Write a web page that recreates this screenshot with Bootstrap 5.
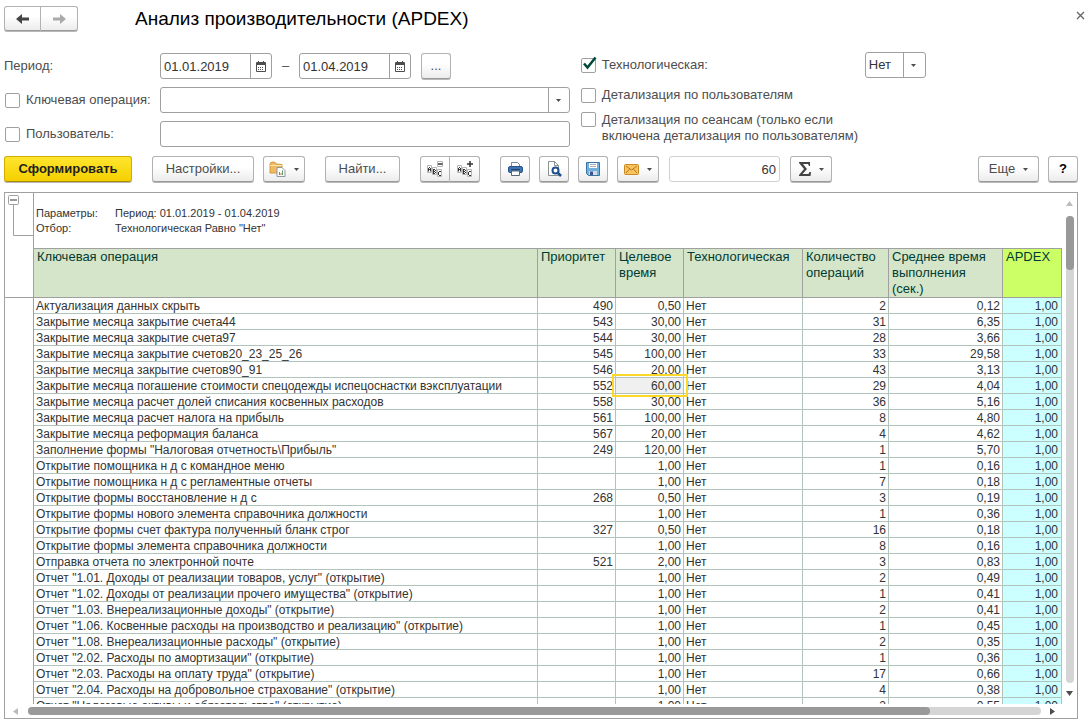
<!DOCTYPE html>
<html lang="ru">
<head>
<meta charset="utf-8">
<meta name="viewport" content="width=device-width, initial-scale=1">
<title>Анализ производительности (APDEX)</title>
<link href="https://cdn.jsdelivr.net/npm/bootstrap@5.3.0/dist/css/bootstrap.min.css" rel="stylesheet">
<style>
:root { --line: #a0a0a0; --ink: #4d4d4d; }
body { font: 13px/16px "Liberation Sans", Arial, sans-serif; color: var(--ink); background: #fff; }
.app-window { height: 100vh; min-height: 480px; padding: 6px 11px 2px 4px; }
.app-title { font-size: 19px; line-height: 26px; color: #000; margin: 0 0 0 57px; font-weight: 400; }
.app-close { border: 0; background: none; padding: 0; width: 16px; height: 16px; line-height: 0; margin-right: -10px; margin-top: 1px; }

.btn-tool { --bs-btn-font-size: 13px; --bs-btn-line-height: 16px; --bs-btn-padding-x: 0; --bs-btn-padding-y: 0;
  --bs-btn-color: #4d4d4d; --bs-btn-border-color: #b2b2b2; --bs-btn-border-radius: 3px; --bs-btn-hover-border-color: #999;
  height: 26px; min-width: 30px; display: inline-flex; align-items: center; justify-content: center;
  background: linear-gradient(#fff 40%, #ececec); border-bottom-color: #999; box-shadow: 0 1px 0 #b8b8b8; }
.btn-main { --bs-btn-color: #1e1e1e; width: 128px; font-weight: 700; background: linear-gradient(#ffe52e, #f5d000);
  border-color: #cfae00; border-bottom-color: #a88e00; }
.btn-settings { width: 102px; }
.btn-find { width: 75px; }
.btn-menu { width: 42px; gap: 8px; }
.btn-more { width: 61px; gap: 8px; }
.btn-nav { width: 37px; height: 25px; }
.btn-pair .btn + .btn { border-left: 0; }
.btn-row { gap: 9px; }

.field { height: 26px; min-height: 26px; padding: 0 3px; border: 1px solid var(--line); border-radius: 3px;
  font-size: 13px; line-height: 16px; color: #333; background-color: #fff; }
.field-btn { width: 22px; height: 26px; padding: 0; border: 1px solid var(--line); border-radius: 3px; background: #fff;
  display: inline-flex; align-items: center; justify-content: center; }
.date-group { width: 112px; }
.date-dash { width: 27px; }
.date-more { margin-left: 10px; }
.field-select { width: 61px; appearance: none;
  background: url("data:image/svg+xml,%3Csvg xmlns='http://www.w3.org/2000/svg' width='22' height='24'%3E%3Cpath d='M.5 0V24' stroke='%23a0a0a0'/%3E%3Cpath d='M8 11h5l-2.5 3z' fill='%234d4d4d'/%3E%3C/svg%3E") no-repeat right center #fff; }
.field-count { width: 111px; margin: 0 1px; border: 1px solid #d0d0d0; text-align: right; }
.tick { display: block; width: 15px; height: 15px; margin: 0; flex: none; border: 1px solid var(--line); border-radius: 2px; appearance: none; background: #fff; }
.tick-wrap { position: relative; flex: none; }
.tick-mark { position: absolute; left: 1px; top: -2px; pointer-events: none; display: none; }
.tick:checked + .tick-mark { display: block; }

.filters { display: grid; grid-template-columns: 8fr 7fr; column-gap: 11px; margin-top: 21px; padding-right: 2px; }
.filters-left { display: grid; grid-template-columns: 156px 1fr; row-gap: 8px; align-items: center; }
.tick-row { display: flex; align-items: center; gap: 6px; }
.filters-left .tick-row { padding-left: 1px; }
.filters-right { display: grid; align-content: start; row-gap: 9px; margin-top: -1px; }
.filters-right label { flex: 0 1 257px; }

.toolbar { margin-top: 9px; column-gap: 20px; }

.report { margin-top: 10px; border: 1px solid var(--line); display: grid; grid-template-columns: 1fr 15px; grid-template-rows: minmax(0, 1fr) 14px; }
.sheet { display: grid; grid-template-columns: 29px 1fr; overflow: hidden; color: #333; }
.gutter { border-right: 1px solid var(--line); }
.gutter-head { height: 105px; border-bottom: 1px solid var(--line); padding: 2px 0 0 3px; margin-right: -1px; }
.params { display: grid; grid-template-columns: 79px 1fr; font-size: 11px; line-height: 15px; padding: 13px 0 12px 2px; margin: 0; height: 55px; }
.params dt { font-weight: 400; }
.grid-table { width: 100%; table-layout: fixed; border-collapse: separate; border-spacing: 0; font-size: 12px; line-height: 14px; }
.grid-table th { height: 50px; padding: 0 2px 0 3px; font-size: 13px; line-height: 16px; font-weight: 400; vertical-align: top; color: #003c34;
  background: #d5e5c9; border: solid var(--line); border-width: 1px 1px 1px 0; }
.grid-table th.mark-col { background: #cf6; }
.grid-table td { height: 16px; padding: 1px 2px 0; white-space: nowrap; border: solid #b0c4bc; border-width: 0 1px 1px 0; text-align: right; }
.grid-table td:first-child, .grid-table td:nth-child(4) { text-align: left; }
.grid-table td:last-child { background: #cff; padding-right: 3px; }
.grid-table td.picked { position: relative; background: #f0f0f0; }
.picked::after { content: ""; position: absolute; inset: -4px -5px -4px -4px; border: 2px solid #fcd928; }

.bar-v { display: flex; flex-direction: column; align-items: center; padding: 8px 0 8px; }
.bar-h { display: flex; align-items: center; padding: 0 7px 0 8px; }
.track { background: #d5d5d5; border-radius: 4px; flex: 1; }
.thumb { background: #999; border-radius: 4px; }
.bar-v .track { width: 8px; margin: 10px 0 8px; }
.bar-v .thumb { height: 54px; }
.bar-h .track { height: 8px; margin: 0 9px 0 10px; }
.bar-h .thumb { height: 8px; width: 89%; }
</style>
</head>
<body>
<main class="app-window d-flex flex-column">
  <header class="d-flex align-items-start">
    <div class="btn-pair d-flex">
      <button class="btn btn-tool btn-nav rounded-end-0" type="button" aria-label="Назад"><svg width="16" height="12" viewBox="0 0 16 12"><path d="M1 6 7 1v3.500h7v3H7V11z" fill="#444"/></svg></button>
      <button class="btn btn-tool btn-nav rounded-start-0" type="button" aria-label="Вперед"><svg width="16" height="12" viewBox="0 0 16 12"><path d="M15 6 9 1v3.500H2v3h7V11z" fill="#aaa"/></svg></button>
    </div>
    <h1 class="app-title flex-grow-1">Анализ производительности (APDEX)</h1>
    <button class="app-close" type="button" aria-label="Закрыть"><svg width="9" height="9" viewBox="0 0 9 9"><path d="m1 1 7 7M8 1 1 8" stroke="#666" stroke-width="1.3"/></svg></button>
  </header>

  <form class="filters">
    <div class="filters-left">
      <label for="from">Период:</label>
      <div class="d-flex align-items-center">
        <div class="input-group date-group flex-nowrap">
          <input class="form-control field" id="from" value="01.01.2019">
          <button class="field-btn" type="button" aria-label="Календарь"><svg width="10" height="11" viewBox="0 0 10 11"><path d="M.5 1.500h9v9h-9z" fill="#fff" stroke="#4d4d4d"/><path d="M0 3h10" stroke="#4d4d4d" stroke-width="2"/><path d="M2.500 0v2M7.500 0v2" stroke="#4d4d4d"/><path d="M2 6.500h6M2 8.500h6" stroke="#4d4d4d" stroke-dasharray="1 1"/></svg></button>
        </div>
        <span class="date-dash text-center">–</span>
        <div class="input-group date-group flex-nowrap">
          <input class="form-control field" id="to" value="01.04.2019" aria-label="Конец периода">
          <button class="field-btn" type="button" aria-label="Календарь"><svg width="10" height="11" viewBox="0 0 10 11"><path d="M.5 1.500h9v9h-9z" fill="#fff" stroke="#4d4d4d"/><path d="M0 3h10" stroke="#4d4d4d" stroke-width="2"/><path d="M2.500 0v2M7.500 0v2" stroke="#4d4d4d"/><path d="M2 6.500h6M2 8.500h6" stroke="#4d4d4d" stroke-dasharray="1 1"/></svg></button>
        </div>
        <button class="btn btn-tool date-more" type="button">...</button>
      </div>
      <div class="tick-row"><input class="tick" type="checkbox" id="useOp"><label for="useOp">Ключевая операция:</label></div>
      <div class="input-group flex-nowrap">
        <input class="form-control field" aria-label="Ключевая операция">
        <button class="field-btn" type="button" aria-label="Выбрать"><svg width="5" height="3"><path d="M0 0h5L2.500 3z" fill="#4d4d4d"/></svg></button>
      </div>
      <div class="tick-row"><input class="tick" type="checkbox" id="useUser"><label for="useUser">Пользователь:</label></div>
      <input class="form-control field" aria-label="Пользователь">
    </div>
    <div class="filters-right">
      <div class="tick-row">
        <span class="tick-wrap"><input class="tick" type="checkbox" id="tech" checked><svg class="tick-mark" width="15" height="14" viewBox="0 0 15 14"><path d="M2 7.500 5.500 11.500 13.500 1.500" fill="none" stroke="#00473c" stroke-width="2.500"/></svg></span>
        <label for="tech">Технологическая:</label>
        <select class="field field-select" aria-label="Технологическая"><option>Нет</option><option>Да</option></select>
      </div>
      <div class="tick-row"><input class="tick" type="checkbox" id="byUser"><label for="byUser">Детализация по пользователям</label></div>
      <div class="tick-row align-items-start"><input class="tick" type="checkbox" id="bySession"><label for="bySession">Детализация по сеансам (только если включена детализация по пользователям)</label></div>
    </div>
  </form>

  <div class="toolbar d-flex align-items-center" role="toolbar">
    <button class="btn btn-tool btn-main" type="button">Сформировать</button>
    <div class="btn-row d-flex">
      <button class="btn btn-tool btn-settings" type="button">Настройки...</button>
      <button class="btn btn-tool btn-menu" type="button" aria-label="Варианты"><svg width="17" height="16" viewBox="0 0 17 16"><path d="M1 3q0-2 3-2t3 2l6 .5V12H1z" fill="#eebb62" stroke="#d39a3c"/><path d="M1 4.500h12" stroke="#fbe2ae"/><path d="M8 6.500h5l3 3v6H8z" fill="#fff" stroke="#8b97a1"/><path d="M10.500 14v-3M13.500 14V9.500" stroke="#59a05b"/><path d="M12 14v-2" stroke="#d96b3b"/></svg><svg width="5" height="3"><path d="M0 0h5L2.500 3z" fill="#4d4d4d"/></svg></button>
    </div>
    <button class="btn btn-tool btn-find" type="button">Найти...</button>
    <div class="btn-pair d-flex">
      <button class="btn btn-tool rounded-end-0" type="button" aria-label="Свернуть группы"><svg width="16" height="17" viewBox="0 0 16 17"><path d="M.5 4.500h4v7h-4zM5.500 6.500h4v7h-4zM10.500 8.500h4v7h-4zM10.500.5h5v5h-5z" fill="#fff" stroke="#b5b5b5"/><path d="M1.500 10.500V7M3.500 10.500V7M2 6.500h1M2 8.500h1M6.500 8v5M7 8.500h1M7 10.500h1M7 12.500h1M8.500 9v1M8.500 11v1M11.500 11v3M12 10.500h2M12 14.500h2" fill="none" stroke="#333"/><path d="M11 3h4.500" stroke="#333" stroke-width="1.500"/></svg></button>
      <button class="btn btn-tool rounded-start-0" type="button" aria-label="Развернуть группы"><svg width="16" height="17" viewBox="0 0 16 17"><path d="M.5 4.500h4v7h-4zM5.500 6.500h4v7h-4zM10.500 8.500h4v7h-4z" fill="#fff" stroke="#b5b5b5"/><path d="M1.500 10.500V7M3.500 10.500V7M2 6.500h1M2 8.500h1M6.500 8v5M7 8.500h1M7 10.500h1M7 12.500h1M8.500 9v1M8.500 11v1M11.500 11v3M12 10.500h2M12 14.500h2" fill="none" stroke="#333"/><path d="M10 3h6M13 0v6" stroke="#333" stroke-width="1.500"/></svg></button>
    </div>
    <div class="btn-row d-flex">
      <button class="btn btn-tool" type="button" aria-label="Печать"><svg width="15" height="14" viewBox="0 0 15 14"><path d="M3.500 5V.5h6l2 2V5" fill="#fff" stroke="#789"/><rect x=".5" y="4.500" width="14" height="6" rx="1.500" fill="#4173ad" stroke="#28568f"/><path d="M3 7.500h9" stroke="#1d447a"/><path d="M3.500 9h8v4.500h-8z" fill="#fff" stroke="#567"/></svg></button>
      <button class="btn btn-tool" type="button" aria-label="Просмотр"><svg width="15" height="16" viewBox="0 0 15 16"><path d="M1.500.5h6l4 4v10h-10z" fill="#fff" stroke="#88938e"/><path d="M7.500.5v4h4" fill="none" stroke="#88938e"/><circle cx="8.500" cy="9.500" r="3" fill="#fff" stroke="#1f4e8c" stroke-width="2"/><path d="m11 12 3 3" stroke="#1f4e8c" stroke-width="2.500"/></svg></button>
      <button class="btn btn-tool" type="button" aria-label="Сохранить"><svg width="14" height="14" viewBox="0 0 14 14"><path d="M.5.5h13v13h-11l-2-2z" fill="#6fb0dc" stroke="#3a73a3"/><path d="M3 1h8v5H3z" fill="#fff"/><path d="M4 2.500h6M4 4.500h6" stroke="#aab"/><path d="M3 9h8v4H3z" fill="#d5dce6"/><path d="M4 9.500h3V13H4z" fill="#3c5487"/></svg></button>
      <button class="btn btn-tool btn-menu" type="button" aria-label="Отправить"><svg width="15" height="11" viewBox="0 0 15 11"><rect x=".5" y=".5" width="14" height="10" rx="1" fill="#f9c35e" stroke="#c98a24"/><path d="m2 2 5.500 4L13 2M2 9l3.500-4M13 9 9.500 5" fill="none" stroke="#b97a1c"/></svg><svg width="5" height="3"><path d="M0 0h5L2.500 3z" fill="#4d4d4d"/></svg></button>
      <input class="field field-count" aria-label="Сумма" value="60">
      <button class="btn btn-tool btn-menu" type="button" aria-label="Сумма"><svg width="12" height="14" viewBox="0 0 12 14"><path d="M0 0h11v4h-1L9 2H4l4 5-4.500 5H9.500l1-2H12l-.5 4H0v-1l5-6L0 1z" fill="#444"/></svg><svg width="5" height="3"><path d="M0 0h5L2.500 3z" fill="#4d4d4d"/></svg></button>
    </div>
    <div class="btn-row d-flex ms-auto">
      <button class="btn btn-tool btn-more" type="button">Еще<svg width="5" height="3"><path d="M0 0h5L2.500 3z" fill="#4d4d4d"/></svg></button>
      <button class="btn btn-tool fw-bold text-black" type="button">?</button>
    </div>
  </div>

  <section class="report flex-grow-1 overflow-hidden">
    <div class="sheet">
      <div class="gutter"><div class="gutter-head"><svg class="d-block" width="26" height="41" viewBox="0 0 26 41"><path d="M5.500 10v30.500H26" fill="none" stroke="#a0a0a0"/><rect x=".5" y=".5" width="10" height="9" rx="1" fill="#fff" stroke="#a0a0a0"/><path d="M2 5h7" stroke="#333"/></svg></div></div>
      <div>
        <dl class="params"><dt>Параметры:</dt><dd class="m-0">Период: 01.01.2019 - 01.04.2019</dd><dt>Отбор:</dt><dd class="m-0">Технологическая Равно "Нет"</dd></dl>
        <table class="grid-table">
          <colgroup><col><col style="width:78px"><col style="width:68px"><col style="width:119px"><col style="width:86px"><col style="width:114px"><col style="width:59px"></colgroup>
          <thead><tr><th>Ключевая операция</th><th>Приоритет</th><th>Целевое время</th><th>Технологическая</th><th>Количество операций</th><th>Среднее время выполнения (сек.)</th><th class="mark-col">APDEX</th></tr></thead>
          <tbody>
            <tr><td>Актуализация данных скрыть</td><td>490</td><td>0,50</td><td>Нет</td><td>2</td><td>0,12</td><td>1,00</td></tr>
            <tr><td>Закрытие месяца закрытие счета44</td><td>543</td><td>30,00</td><td>Нет</td><td>31</td><td>6,35</td><td>1,00</td></tr>
            <tr><td>Закрытие месяца закрытие счета97</td><td>544</td><td>30,00</td><td>Нет</td><td>28</td><td>3,66</td><td>1,00</td></tr>
            <tr><td>Закрытие месяца закрытие счетов20_23_25_26</td><td>545</td><td>100,00</td><td>Нет</td><td>33</td><td>29,58</td><td>1,00</td></tr>
            <tr><td>Закрытие месяца закрытие счетов90_91</td><td>546</td><td>20,00</td><td>Нет</td><td>43</td><td>3,13</td><td>1,00</td></tr>
            <tr><td>Закрытие месяца погашение стоимости спецодежды испецоснастки вэксплуатации</td><td>552</td><td class="picked">60,00</td><td>Нет</td><td>29</td><td>4,04</td><td>1,00</td></tr>
            <tr><td>Закрытие месяца расчет долей списания косвенных расходов</td><td>558</td><td>30,00</td><td>Нет</td><td>36</td><td>5,16</td><td>1,00</td></tr>
            <tr><td>Закрытие месяца расчет налога на прибыль</td><td>561</td><td>100,00</td><td>Нет</td><td>8</td><td>4,80</td><td>1,00</td></tr>
            <tr><td>Закрытие месяца реформация баланса</td><td>567</td><td>20,00</td><td>Нет</td><td>4</td><td>4,62</td><td>1,00</td></tr>
            <tr><td>Заполнение формы "Налоговая отчетность\Прибыль"</td><td>249</td><td>120,00</td><td>Нет</td><td>1</td><td>5,70</td><td>1,00</td></tr>
            <tr><td>Открытие помощника н д с командное меню</td><td></td><td>1,00</td><td>Нет</td><td>1</td><td>0,16</td><td>1,00</td></tr>
            <tr><td>Открытие помощника н д с регламентные отчеты</td><td></td><td>1,00</td><td>Нет</td><td>7</td><td>0,18</td><td>1,00</td></tr>
            <tr><td>Открытие формы восстановление н д с</td><td>268</td><td>0,50</td><td>Нет</td><td>3</td><td>0,19</td><td>1,00</td></tr>
            <tr><td>Открытие формы нового элемента справочника должности</td><td></td><td>1,00</td><td>Нет</td><td>1</td><td>0,36</td><td>1,00</td></tr>
            <tr><td>Открытие формы счет фактура полученный бланк строг</td><td>327</td><td>0,50</td><td>Нет</td><td>16</td><td>0,18</td><td>1,00</td></tr>
            <tr><td>Открытие формы элемента справочника должности</td><td></td><td>1,00</td><td>Нет</td><td>8</td><td>0,16</td><td>1,00</td></tr>
            <tr><td>Отправка отчета по электронной почте</td><td>521</td><td>2,00</td><td>Нет</td><td>3</td><td>0,83</td><td>1,00</td></tr>
            <tr><td>Отчет "1.01. Доходы от реализации товаров, услуг" (открытие)</td><td></td><td>1,00</td><td>Нет</td><td>2</td><td>0,49</td><td>1,00</td></tr>
            <tr><td>Отчет "1.02. Доходы от реализации прочего имущества" (открытие)</td><td></td><td>1,00</td><td>Нет</td><td>1</td><td>0,41</td><td>1,00</td></tr>
            <tr><td>Отчет "1.03. Внереализационные доходы" (открытие)</td><td></td><td>1,00</td><td>Нет</td><td>2</td><td>0,41</td><td>1,00</td></tr>
            <tr><td>Отчет "1.06. Косвенные расходы на производство и реализацию" (открытие)</td><td></td><td>1,00</td><td>Нет</td><td>1</td><td>0,45</td><td>1,00</td></tr>
            <tr><td>Отчет "1.08. Внереализационные расходы" (открытие)</td><td></td><td>1,00</td><td>Нет</td><td>2</td><td>0,35</td><td>1,00</td></tr>
            <tr><td>Отчет "2.02. Расходы по амортизации" (открытие)</td><td></td><td>1,00</td><td>Нет</td><td>1</td><td>0,36</td><td>1,00</td></tr>
            <tr><td>Отчет "2.03. Расходы на оплату труда" (открытие)</td><td></td><td>1,00</td><td>Нет</td><td>17</td><td>0,66</td><td>1,00</td></tr>
            <tr><td>Отчет "2.04. Расходы на добровольное страхование" (открытие)</td><td></td><td>1,00</td><td>Нет</td><td>4</td><td>0,38</td><td>1,00</td></tr>
            <tr><td>Отчет "Налоговые активы и обязательства" (открытие)</td><td></td><td>1,00</td><td>Нет</td><td>2</td><td>0,55</td><td>1,00</td></tr>
          </tbody>
        </table>
      </div>
    </div>
    <div class="bar-v"><svg width="7" height="5"><path d="M0 5h7L3.500 0z" fill="#bbb"/></svg><div class="track"><div class="thumb"></div></div><svg width="7" height="5"><path d="M0 0h7L3.500 5z" fill="#4d4d4d"/></svg></div>
    <div class="bar-h"><svg width="5" height="7"><path d="M5 0v7L0 3.500z" fill="#bbb"/></svg><div class="track"><div class="thumb"></div></div><svg width="5" height="7"><path d="M0 0v7l5-3.500z" fill="#4d4d4d"/></svg></div>
  </section>
</main>
<script src="https://cdn.jsdelivr.net/npm/bootstrap@5.3.0/dist/js/bootstrap.bundle.min.js"></script>
</body>
</html>
